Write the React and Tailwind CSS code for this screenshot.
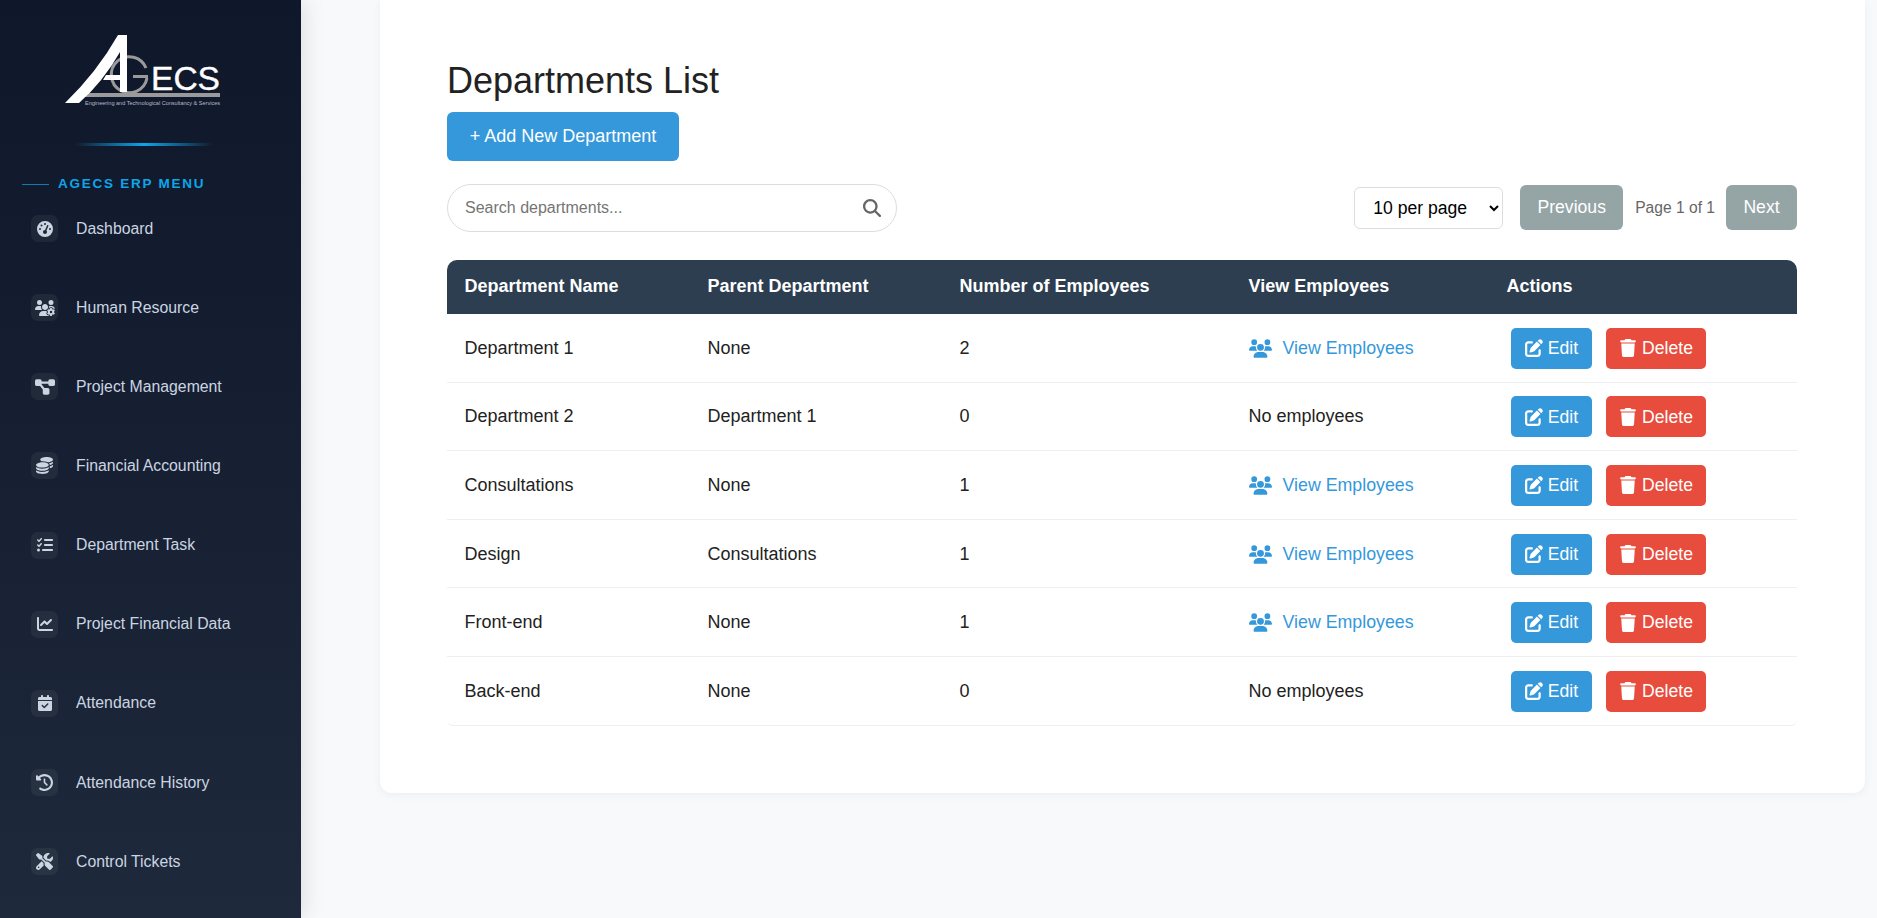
import React from 'react';
import {
  FaGaugeHigh, FaUsersGear, FaDiagramProject, FaCoins, FaListCheck, FaChartLine,
  FaCalendarCheck, FaClockRotateLeft, FaScrewdriverWrench, FaMagnifyingGlass, FaUsers, FaPenToSquare, FaTrash,
} from 'react-icons/fa6';

const menu = [
  { label: 'Dashboard', icon: FaGaugeHigh, size: 'text-[16px]' },
  { label: 'Human Resource', icon: FaUsersGear, size: 'text-[20px]' },
  { label: 'Project Management', icon: FaDiagramProject, size: 'text-[20px]' },
  { label: 'Financial Accounting', icon: FaCoins, size: 'text-[17px]' },
  { label: 'Department Task', icon: FaListCheck, size: 'text-[16px]' },
  { label: 'Project Financial Data', icon: FaChartLine, size: 'text-[16px]' },
  { label: 'Attendance', icon: FaCalendarCheck, size: 'text-[16px]' },
  { label: 'Attendance History', icon: FaClockRotateLeft, size: 'text-[17px]' },
  { label: 'Control Tickets', icon: FaScrewdriverWrench, size: 'text-[17px]' },
];

const departments = [
  { name: 'Department 1', parent: 'None', count: 2 },
  { name: 'Department 2', parent: 'Department 1', count: 0 },
  { name: 'Consultations', parent: 'None', count: 1 },
  { name: 'Design', parent: 'Consultations', count: 1 },
  { name: 'Front-end', parent: 'None', count: 1 },
  { name: 'Back-end', parent: 'None', count: 0 },
];

const Logo = () => (
  <svg width="170" height="80" viewBox="0 0 170 80" className="block">
    {/* gray G ring and base bar */}
    <path d="M81 38 A18 18 0 1 0 82 48" fill="none" stroke="#9a9a9a" strokeWidth="3" />
    <rect x="68" y="45" width="15" height="3" fill="#9a9a9a" />
    <rect x="20" y="63" width="135" height="4" fill="#9a9a9a" />
    {/* the A */}
    <path d="M0 73 Q32 42 53 5 L62 5 L62 62 L55 62 L55 50 L38 50 L41 45 L55 45 L55 22 Q38 52 14 73 Z" fill="#fff" />
    <text x="86" y="60" fontFamily="'Liberation Sans', sans-serif" fontSize="34" fill="#fff" stroke="#fff" strokeWidth="0.4" textLength="69" lengthAdjust="spacingAndGlyphs">ECS</text>
    <text x="20" y="74.5" fontFamily="'Liberation Sans', sans-serif" fontSize="6" fill="#b8bcc4" textLength="135" lengthAdjust="spacingAndGlyphs">Engineering and Technological Consultancy &amp; Services</text>
  </svg>
);

const Sidebar = () => (
  <aside className="w-[301px] h-full shrink-0 flex flex-col bg-gradient-to-b from-[#0f172a] to-[#1e293b] shadow-[4px_0_20px_rgba(0,0,0,0.1)] z-10">
    <div className="pt-[30px] pl-[65px]">
      <Logo />
    </div>
    <div className="mt-[33px] ml-[75px] w-[138px] h-[3px] bg-gradient-to-r from-transparent via-[#0ea5e9] to-transparent" />
    <div className="mt-[30px] pl-[22px] flex items-center h-[16px]">
      <span className="w-[27px] h-px bg-[#0ea5e9] opacity-70" />
      <span className="ml-[9px] text-[13.5px] font-bold tracking-[1.75px] text-[#0ea5e9]">AGECS ERP MENU</span>
    </div>
    <nav className="mt-[23px] pl-[31px] flex flex-col gap-[52.125px]">
      {menu.map((item) => (
        <a key={item.label} className="flex items-center h-[27px] text-[15.8px] text-[#cbd5e1]">
          <span className="w-[27px] h-[27px] rounded-[7px] bg-white/5 flex items-center justify-center text-[#cbd5e1]">
            <item.icon className={item.size} />
          </span>
          <span className="ml-[18px]">{item.label}</span>
        </a>
      ))}
    </nav>
  </aside>
);

const Cell = ({ className = '', children }) => (
  <td className={`pl-[17.5px] border-b border-[#ecf0f1] ${className}`}>{children}</td>
);

const Departments = () => (
  <main className="flex-1 pl-[79px] pr-[12px]">
    <div className="h-[793px] bg-white rounded-b-xl shadow-[0_2px_10px_rgba(0,0,0,0.05)] pl-[67px] pr-[68px] pt-[60px]">
      <h1 className="text-[36px] leading-[42px] text-[#222]">Departments List</h1>
      <button className="mt-[10px] block w-[232px] h-[49px] rounded-[6px] bg-[#3498db] text-white text-[18px]">+ Add New Department</button>

      <div className="mt-[23px] flex items-center justify-between">
        <div className="relative w-[450px]">
          <input
            placeholder="Search departments..."
            className="w-full h-[48px] rounded-full border border-[#ddd] pl-[17px] pr-[40px] text-[16px] placeholder:text-[#757575]"
          />
          <FaMagnifyingGlass className="absolute right-[16px] top-[15px] text-[18px] text-[#666]" />
        </div>
        <div className="flex items-center">
          <select className="w-[149px] h-[42px] rounded-[6px] border border-[#ddd] bg-white pl-[14px] text-[17.6px] text-black">
            <option>10 per page</option>
          </select>
          <button className="ml-[17px] -mt-[2px] w-[103px] h-[45px] rounded-[6px] bg-[#95a5a6] text-white text-[17.6px]">Previous</button>
          <span className="ml-[12px] mr-[11px] text-[15.6px] text-[#666]">Page 1 of 1</span>
          <button className="-mt-[2px] w-[71px] h-[45px] rounded-[6px] bg-[#95a5a6] text-white text-[17.6px]">Next</button>
        </div>
      </div>

      <table className="mt-[28px] w-full table-fixed border-separate border-spacing-0 text-[18px] text-[#222]">
        <colgroup>
          <col className="w-[243px]" />
          <col className="w-[252px]" />
          <col className="w-[289px]" />
          <col className="w-[258px]" />
          <col />
        </colgroup>
        <thead>
          <tr className="h-[54px] bg-[#2c3e50] text-white text-left font-bold">
            <th className="pl-[17.5px] pb-px rounded-tl-[10px]">Department Name</th>
            <th className="pl-[17.5px] pb-px">Parent Department</th>
            <th className="pl-[17.5px] pb-px">Number of Employees</th>
            <th className="pl-[17.5px] pb-px">View Employees</th>
            <th className="pl-[17.5px] pb-px rounded-tr-[10px]">Actions</th>
          </tr>
        </thead>
        <tbody>
          {departments.map((dept, i) => {
            const isLast = i === departments.length - 1;
            return (
              <tr key={dept.name} className="h-[68.6px]">
                <Cell className={isLast ? 'rounded-bl-[6px] pt-px' : 'pt-px'}>{dept.name}</Cell>
                <Cell className="pt-px">{dept.parent}</Cell>
                <Cell className="pt-px">{dept.count}</Cell>
                <Cell className="pt-px">
                  {dept.count > 0 ? (
                    <a className="flex items-center text-[#3498db] text-[17.8px]">
                      <FaUsers className="text-[23px] mr-[11px]" />
                      View Employees
                    </a>
                  ) : (
                    'No employees'
                  )}
                </Cell>
                <Cell className={isLast ? 'rounded-br-[6px]' : ''}>
                  <div className="flex gap-[14px] ml-[4.5px] mt-px text-[17.6px]">
                    <button className="flex items-center justify-center gap-[5px] w-[81px] h-[41px] rounded-[5px] bg-[#3498db] text-white">
                      <FaPenToSquare className="text-[18px]" /> Edit
                    </button>
                    <button className="flex items-center justify-center gap-[5px] w-[100px] h-[41px] rounded-[5px] bg-[#e74c3c] text-white">
                      <FaTrash className="text-[18px]" /> Delete
                    </button>
                  </div>
                </Cell>
              </tr>
            );
          })}
        </tbody>
      </table>
    </div>
  </main>
);

export default function App() {
  return (
    <div className="flex h-screen overflow-hidden bg-[#f8f9fa] font-['Liberation_Sans',Arial,sans-serif]">
      <Sidebar />
      <Departments />
    </div>
  );
}
